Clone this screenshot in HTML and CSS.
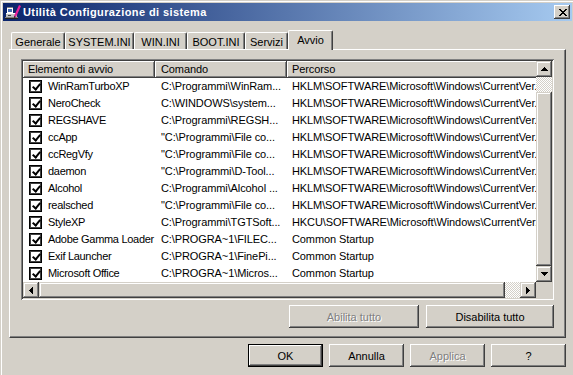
FILE: index.html
```html
<!DOCTYPE html>
<html lang="it">
<head>
<meta charset="utf-8">
<title>Utilità Configurazione di sistema</title>
<link rel="stylesheet" href="styles.css">
</head>
<body>
<div class="window">
  <div class="titlebar">
    <svg class="app-icon" width="16" height="16" viewBox="0 0 16 16" shape-rendering="crispEdges">
      <rect x="2" y="3" width="6" height="6" fill="#ffffff"/>
      <rect x="2" y="3" width="6" height="1" fill="#808080"/>
      <rect x="3" y="5" width="4" height="3" fill="#4a6fb5"/>
      <rect x="1" y="9" width="11" height="4" fill="#c0c0c0"/>
      <rect x="1" y="9" width="11" height="1" fill="#ffffff"/>
      <rect x="3" y="11" width="3" height="1" fill="#404040"/>
      <rect x="0" y="13" width="13" height="2" fill="#202020"/>
      <rect x="0" y="13" width="13" height="1" fill="#808080"/>
      <polygon points="9,12 14,1 16,2 11,13" fill="#e8209a" shape-rendering="auto"/>
      <polygon points="9,12 11,13 9,14" fill="#400030" shape-rendering="auto"/>
    </svg>
    <span class="title">Utilità Configurazione di sistema</span>
    <div class="close-btn raised">
      <svg width="8" height="7" viewBox="0 0 8 7" shape-rendering="crispEdges">
        <rect x="0" y="0" width="2" height="1"/><rect x="6" y="0" width="2" height="1"/>
        <rect x="1" y="1" width="2" height="1"/><rect x="5" y="1" width="2" height="1"/>
        <rect x="2" y="2" width="4" height="1"/>
        <rect x="3" y="3" width="2" height="1"/>
        <rect x="2" y="4" width="4" height="1"/>
        <rect x="1" y="5" width="2" height="1"/><rect x="5" y="5" width="2" height="1"/>
        <rect x="0" y="6" width="2" height="1"/><rect x="6" y="6" width="2" height="1"/>
      </svg>
    </div>
  </div>

  <div class="content">
    <div class="tabs">
      <div class="tab t-gen">Generale</div>
      <div class="tab t-sys">SYSTEM.INI</div>
      <div class="tab t-win">WIN.INI</div>
      <div class="tab t-boot">BOOT.INI</div>
      <div class="tab t-serv">Servizi</div>
      <div class="tab t-avvio active">Avvio</div>
    </div>

    <div class="panel">
      <div class="listview">
        <div class="lv-main">
          <div class="lv-header">
            <div class="hcell c1">Elemento di avvio</div>
            <div class="hcell c2">Comando</div>
            <div class="hcell c3">Percorso</div>
          </div>
          <div class="lv-body">
            <div class="row"><div class="cell c1"><span class="check"></span>WinRamTurboXP</div><div class="cell c2">C:\Programmi\WinRam...</div><div class="cell c3">HKLM\SOFTWARE\Microsoft\Windows\CurrentVer...</div></div>
            <div class="row"><div class="cell c1"><span class="check"></span>NeroCheck</div><div class="cell c2">C:\WINDOWS\system...</div><div class="cell c3">HKLM\SOFTWARE\Microsoft\Windows\CurrentVer...</div></div>
            <div class="row"><div class="cell c1"><span class="check"></span>REGSHAVE</div><div class="cell c2">C:\Programmi\REGSH...</div><div class="cell c3">HKLM\SOFTWARE\Microsoft\Windows\CurrentVer...</div></div>
            <div class="row"><div class="cell c1"><span class="check"></span>ccApp</div><div class="cell c2">"C:\Programmi\File co...</div><div class="cell c3">HKLM\SOFTWARE\Microsoft\Windows\CurrentVer...</div></div>
            <div class="row"><div class="cell c1"><span class="check"></span>ccRegVfy</div><div class="cell c2">"C:\Programmi\File co...</div><div class="cell c3">HKLM\SOFTWARE\Microsoft\Windows\CurrentVer...</div></div>
            <div class="row"><div class="cell c1"><span class="check"></span>daemon</div><div class="cell c2">"C:\Programmi\D-Tool...</div><div class="cell c3">HKLM\SOFTWARE\Microsoft\Windows\CurrentVer...</div></div>
            <div class="row"><div class="cell c1"><span class="check"></span>Alcohol</div><div class="cell c2">C:\Programmi\Alcohol ...</div><div class="cell c3">HKLM\SOFTWARE\Microsoft\Windows\CurrentVer...</div></div>
            <div class="row"><div class="cell c1"><span class="check"></span>realsched</div><div class="cell c2">"C:\Programmi\File co...</div><div class="cell c3">HKLM\SOFTWARE\Microsoft\Windows\CurrentVer...</div></div>
            <div class="row"><div class="cell c1"><span class="check"></span>StyleXP</div><div class="cell c2">C:\Programmi\TGTSoft...</div><div class="cell c3">HKCU\SOFTWARE\Microsoft\Windows\CurrentVer...</div></div>
            <div class="row"><div class="cell c1"><span class="check"></span>Adobe Gamma Loader</div><div class="cell c2">C:\PROGRA~1\FILEC...</div><div class="cell c3">Common Startup</div></div>
            <div class="row"><div class="cell c1"><span class="check"></span>Exif Launcher</div><div class="cell c2">C:\PROGRA~1\FinePi...</div><div class="cell c3">Common Startup</div></div>
            <div class="row"><div class="cell c1"><span class="check"></span>Microsoft Office</div><div class="cell c2">C:\PROGRA~1\Micros...</div><div class="cell c3">Common Startup</div></div>
          </div>
        </div>
        <div class="vscroll">
          <div class="sb-btn sb-raised">
            <svg width="7" height="4" viewBox="0 0 7 4" shape-rendering="crispEdges"><rect x="3" y="0" width="1" height="1"/><rect x="2" y="1" width="3" height="1"/><rect x="1" y="2" width="5" height="1"/><rect x="0" y="3" width="7" height="1"/></svg>
          </div>
          <div class="sb-track v-track"></div>
          <div class="sb-thumb v-thumb sb-raised"></div>
          <div class="sb-btn sb-raised">
            <svg width="7" height="4" viewBox="0 0 7 4" shape-rendering="crispEdges"><rect x="0" y="0" width="7" height="1"/><rect x="1" y="1" width="5" height="1"/><rect x="2" y="2" width="3" height="1"/><rect x="3" y="3" width="1" height="1"/></svg>
          </div>
        </div>
        <div class="hscroll">
          <div class="sb-btn sb-raised">
            <svg width="4" height="7" viewBox="0 0 4 7" shape-rendering="crispEdges"><rect x="0" y="3" width="1" height="1"/><rect x="1" y="2" width="1" height="3"/><rect x="2" y="1" width="1" height="5"/><rect x="3" y="0" width="1" height="7"/></svg>
          </div>
          <div class="sb-thumb h-thumb sb-raised"></div>
          <div class="sb-track h-track"></div>
          <div class="sb-btn sb-raised">
            <svg width="4" height="7" viewBox="0 0 4 7" shape-rendering="crispEdges"><rect x="0" y="0" width="1" height="7"/><rect x="1" y="1" width="1" height="5"/><rect x="2" y="2" width="1" height="3"/><rect x="3" y="3" width="1" height="1"/></svg>
          </div>
        </div>
        <div class="corner"></div>
      </div>

      <div class="panel-buttons">
        <div class="btn raised btn-enable disabled">Abilita tutto</div>
        <div class="btn raised btn-disable">Disabilita tutto</div>
      </div>
    </div>

    <div class="dialog-buttons">
      <div class="btn btn-std default">OK</div>
      <div class="btn btn-std raised">Annulla</div>
      <div class="btn btn-std raised disabled">Applica</div>
      <div class="btn btn-std raised">?</div>
    </div>
  </div>
</div>
</body>
</html>
```

FILE: styles.css
```css
* {
  box-sizing: border-box;
}

html,
body {
  margin: 0;
  padding: 0;
}

body {
  width: 573px;
  height: 375px;
  overflow: hidden;
  background: #d4d0c8;
  font-family: "Liberation Sans", Arial, sans-serif;
  font-size: 11px;
  color: #000;
}

/* ---------- window frame ---------- */
.window {
  width: 575px;
  height: 378px;
  background: #d4d0c8;
  border: 1px solid;
  border-color: #d4d0c8 #404040 #404040 #d4d0c8;
  padding: 2px;
  box-shadow: inset 1px 1px #ffffff, inset -1px -1px #808080;
}

.raised {
  background: #d4d0c8;
  box-shadow: inset -1px -1px #404040, inset 1px 1px #ffffff,
    inset -2px -2px #808080, inset 2px 2px #d4d0c8;
}

.sb-raised {
  background: #d4d0c8;
  box-shadow: inset -1px -1px #404040, inset 1px 1px #d4d0c8,
    inset -2px -2px #808080, inset 2px 2px #ffffff;
}

/* ---------- title bar ---------- */
.titlebar {
  height: 18px;
  display: flex;
  align-items: center;
  padding: 0 2px;
  background: linear-gradient(to right, #0a246a, #a6caf0);
}

.app-icon {
  flex: none;
  display: block;
}

.title {
  margin-left: 2px;
  color: #fff;
  font-weight: bold;
  letter-spacing: 0.4px;
  white-space: nowrap;
}

.close-btn {
  margin-left: auto;
  width: 16px;
  height: 14px;
  display: flex;
  align-items: center;
  justify-content: center;
  padding-left: 1px;
}

.close-btn svg {
  display: block;
  fill: #000;
}

/* ---------- content ---------- */
.content {
  padding: 9px 6px 0;
}

.tabs {
  display: flex;
  align-items: flex-end;
  height: 19px;
  padding-left: 2px;
}

.tab {
  flex: none;
  height: 17px;
  display: flex;
  align-items: center;
  justify-content: center;
  padding-top: 1px;
  border-top: 1px solid #fff;
  border-left: 1px solid #fff;
  border-right: 1px solid #404040;
  border-radius: 2px 2px 0 0;
  box-shadow: inset -1px 0 #808080;
  white-space: nowrap;
}

.t-gen { width: 54px; }
.t-sys { width: 69px; }
.t-win { width: 53px; }
.t-boot { width: 58px; }
.t-serv { width: 43px; }
.t-avvio { width: 45px; }

.tab.active {
  height: 20px;
  margin-bottom: -1px;
  padding-top: 0;
  padding-bottom: 1px;
  position: relative;
  z-index: 1;
  background: #d4d0c8;
}

.panel {
  height: 289px;
  border-top: 1px solid #fff;
  border-left: 1px solid #fff;
  border-right: 1px solid #404040;
  border-bottom: 1px solid #404040;
  box-shadow: inset -1px -1px #808080;
  padding: 9px 11px 0 11px;
}

/* ---------- list view ---------- */
.listview {
  width: 533px;
  height: 241px;
  padding: 2px;
  background: #fff;
  box-shadow: inset 1px 1px #808080, inset -1px -1px #ffffff,
    inset 2px 2px #404040, inset -2px -2px #d4d0c8;
  display: grid;
  grid-template-columns: 513px 16px;
  grid-template-rows: 221px 16px;
}

.lv-main {
  overflow: hidden;
  background: #fff;
  letter-spacing: -0.1px;
}

.lv-header {
  display: flex;
  height: 17px;
  width: 700px;
}

.hcell {
  flex: none;
  height: 17px;
  line-height: 17px;
  background: #d4d0c8;
  box-shadow: inset -1px -1px #404040, inset 1px 1px #ffffff,
    inset -2px -2px #808080;
  white-space: nowrap;
  overflow: hidden;
}

.hcell.c1 { width: 132px; padding-left: 5px; }
.hcell.c2 { width: 132px; padding-left: 6px; }
.hcell.c3 { width: 400px; padding-left: 5px; }

.row {
  display: flex;
  height: 17px;
  line-height: 17px;
  width: 700px;
  white-space: nowrap;
}

.cell {
  flex: none;
  overflow: hidden;
}

.row .c1 {
  width: 132px;
  padding-left: 6px;
  display: flex;
  align-items: center;
  gap: 6px;
  letter-spacing: -0.3px;
}

.row .c2 { width: 132px; padding-left: 6px; }
.row .c3 { width: 400px; padding-left: 5px; }

.check {
  flex: none;
  width: 13px;
  height: 13px;
  border: 1px solid #000;
  box-shadow: inset 0 0 0 1px #404040;
  background: #fff;
  position: relative;
}

.check::after {
  content: "";
  position: absolute;
  left: 4px;
  top: 1px;
  width: 3px;
  height: 6px;
  border: solid #000;
  border-width: 0 2px 2px 0;
  transform: rotate(40deg);
}

/* ---------- scrollbars ---------- */
.vscroll {
  display: flex;
  flex-direction: column;
}

.hscroll {
  display: flex;
}

.sb-btn {
  flex: none;
  width: 16px;
  height: 16px;
  display: flex;
  align-items: center;
  justify-content: center;
}

.sb-btn svg {
  display: block;
  fill: #000;
}

.sb-track {
  background-color: #fff;
  background-image: conic-gradient(#d4d0c8 25%, #fff 0 50%, #d4d0c8 0 75%, #fff 0);
  background-size: 2px 2px;
}

.v-track { flex: none; height: 15px; }
.v-thumb { flex: none; height: 174px; }
.h-thumb { flex: none; width: 466px; }
.h-track { flex: 1; }

.corner {
  background: #d4d0c8;
}

/* ---------- buttons ---------- */
.btn {
  height: 23px;
  display: flex;
  align-items: center;
  justify-content: center;
  white-space: nowrap;
}

.disabled {
  color: #808080;
  text-shadow: 1px 1px 0 #fff;
}

.panel-buttons {
  display: flex;
  justify-content: flex-end;
  gap: 7px;
  margin-top: 5px;
}

.btn-enable { width: 130px; }
.btn-disable { width: 128px; }

.dialog-buttons {
  display: flex;
  justify-content: flex-end;
  gap: 6px;
  margin-top: 6px;
}

.btn-std { width: 75px; }

.default {
  background: #d4d0c8;
  box-shadow: inset 0 0 0 1px #000, inset -2px -2px #404040,
    inset 2px 2px #ffffff, inset -3px -3px #808080;
}
```
